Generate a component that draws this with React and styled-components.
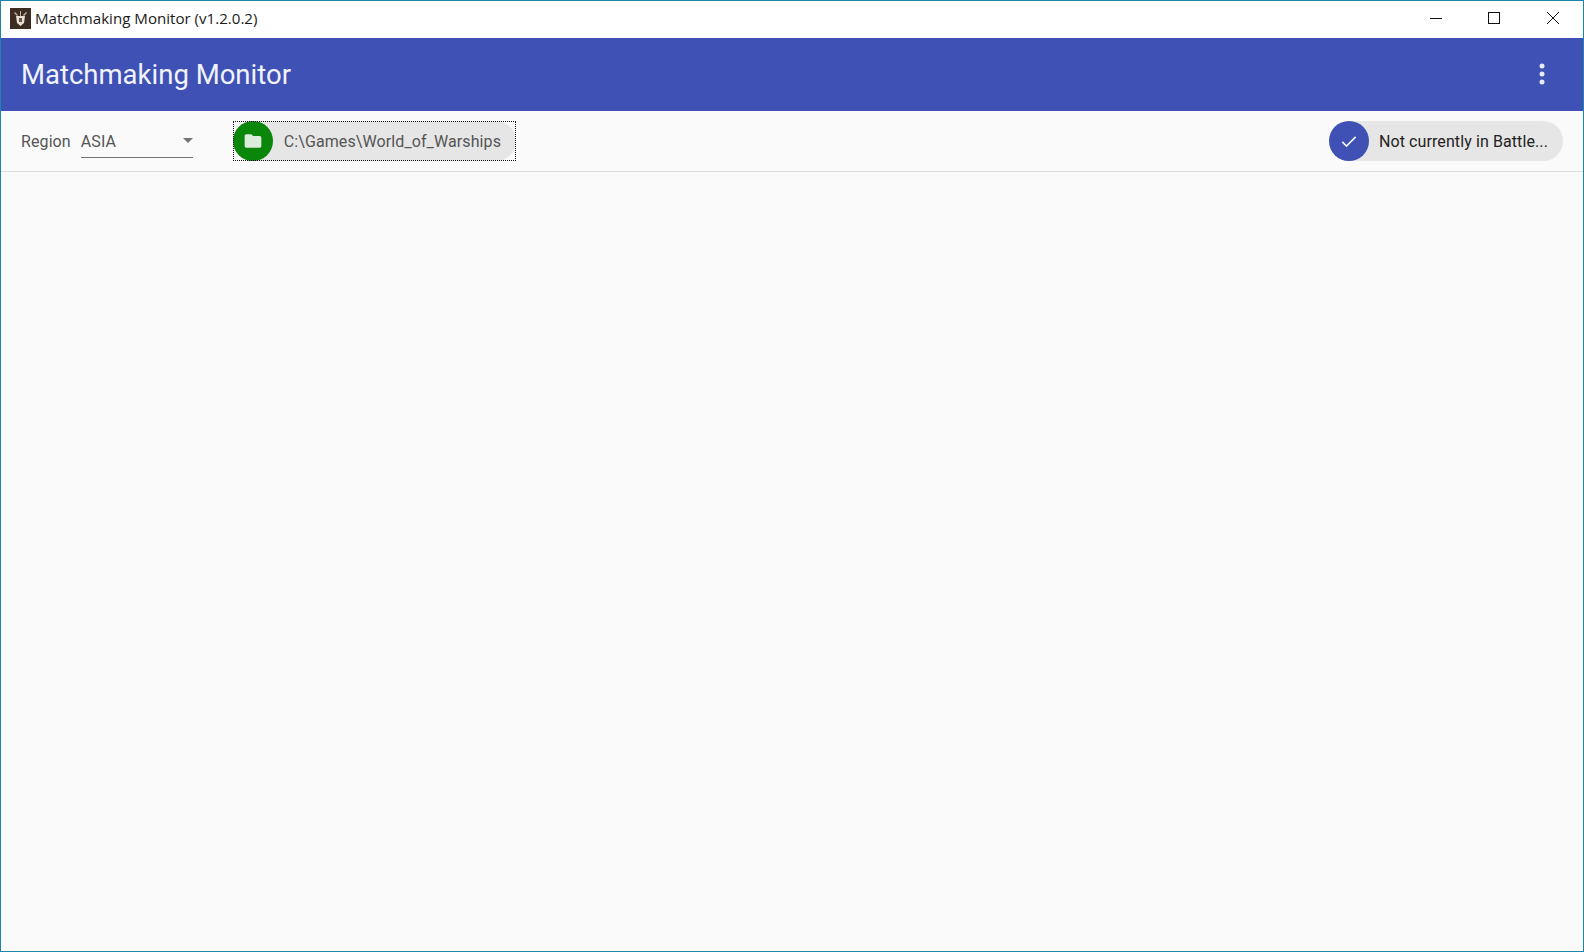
import React from "react";
import styled, { createGlobalStyle } from "styled-components";

const GlobalStyle = createGlobalStyle`
  html, body {
    margin: 0;
    padding: 0;
    background: #fafafa;
  }
  * {
    box-sizing: border-box;
  }
`;

const Window = styled.div`
  width: 1584px;
  height: 952px;
  display: flex;
  flex-direction: column;
  overflow: hidden;
  border: 1px solid #1a86a8;
  background: #fafafa;
  font-family: Roboto, sans-serif;
`;

const TitleBar = styled.div`
  height: 37px;
  flex: none;
  display: flex;
  align-items: center;
  background: #fff;
  padding: 0 0 3px 9px;
`;

const AppIcon = styled.svg`
  width: 21px;
  height: 21px;
  flex: none;
  margin-right: 4px;
`;

const WindowTitle = styled.div`
  flex: 1;
  font-family: "Open Sans", sans-serif;
  font-size: 15.1px;
  color: #1a1a1a;
  white-space: nowrap;
`;

const WindowButton = styled.div`
  width: 58px;
  height: 30px;
  display: flex;
  align-items: center;
  justify-content: center;
`;

const CloseButton = styled(WindowButton)`
  width: 60px;
`;

const WindowButtons = styled.div`
  display: flex;
`;

const AppBar = styled.div`
  height: 73px;
  flex: none;
  display: flex;
  align-items: center;
  justify-content: space-between;
  background: #3f51b5;
  padding: 0 20px;
  color: #fff;
`;

const AppTitle = styled.div`
  font-size: 27.5px;
  font-weight: 400;
  color: #f1f3fb;
`;

const MenuDots = styled.svg`
  width: 10px;
  height: 24px;
  margin: 0 16px 2px 0;
`;

const Toolbar = styled.div`
  height: 61px;
  flex: none;
  display: flex;
  align-items: center;
  padding: 0 20px;
  border-bottom: 1px solid #dedede;
  font-size: 16px;
  letter-spacing: 0.1px;
`;

const RegionLabel = styled.span`
  color: #555;
  margin-right: 10px;
`;

const RegionSelect = styled.div`
  width: 112px;
  height: 34px;
  padding-top: 2px;
  display: flex;
  align-items: center;
  justify-content: space-between;
  border-bottom: 1px solid #757575;
  color: #555;
  margin-right: 40px;
`;

const Caret = styled.span`
  width: 0;
  height: 0;
  margin-top: -2px;
  border-left: 5px solid transparent;
  border-right: 5px solid transparent;
  border-top: 5px solid #757575;
`;

const Chip = styled.div`
  height: 40px;
  display: flex;
  align-items: center;
  border-radius: 20px;
  background: #e6e6e6;
  padding-right: 15px;
  color: ${(props) => props.$text};
`;

const FocusFrame = styled.div`
  outline: 1px dotted #111;
  outline-offset: -1px;
`;

const ChipIcon = styled.div`
  width: 40px;
  height: 40px;
  flex: none;
  display: flex;
  align-items: center;
  justify-content: center;
  border-radius: 50%;
  margin-right: ${(props) => props.$gap}px;
  background: ${(props) => props.$bg};
`;

const Spacer = styled.div`
  flex: 1;
`;

const Main = styled.div`
  flex: 1;
  background: #fafafa;
`;

const App = () => {
  return (
    <Window>
      <GlobalStyle />
      <TitleBar>
        <AppIcon viewBox="0 0 21 21">
          <rect width="21" height="21" fill="#3d2c22" />
          <path d="M6 8h9l-1 7-3.500 3-3.500-3z" fill="#e6ded2" />
          <path d="M10 3h1v5h-1zM5 4l3 3-1 1-3-3zM16 4l1 1-3 3-1-1z" fill="#b9afa3" />
          <rect x="9" y="10" width="3" height="4" fill="#6b5a4c" />
        </AppIcon>
        <WindowTitle>Matchmaking Monitor (v1.2.0.2)</WindowTitle>
        <WindowButtons>
          <WindowButton>
            <svg width="12" height="12" viewBox="0 0 12 12">
              <path d="M0 6.500h12" stroke="#111" />
            </svg>
          </WindowButton>
          <WindowButton>
            <svg width="12" height="12" viewBox="0 0 12 12">
              <rect x="0.500" y="0.500" width="11" height="11" fill="none" stroke="#111" />
            </svg>
          </WindowButton>
          <CloseButton>
            <svg width="12" height="12" viewBox="0 0 12 12">
              <path d="M0 0l12 12M12 0L0 12" stroke="#111" />
            </svg>
          </CloseButton>
        </WindowButtons>
      </TitleBar>
      <AppBar>
        <AppTitle>Matchmaking Monitor</AppTitle>
        <MenuDots viewBox="0 0 10 24">
          <circle cx="5" cy="4" r="2.500" fill="#e8ebf8" />
          <circle cx="5" cy="12" r="2.500" fill="#e8ebf8" />
          <circle cx="5" cy="20" r="2.500" fill="#e8ebf8" />
        </MenuDots>
      </AppBar>
      <Toolbar>
        <RegionLabel>Region</RegionLabel>
        <RegionSelect>
          ASIA
          <Caret />
        </RegionSelect>
        <FocusFrame>
          <Chip $text="#555">
            <ChipIcon $bg="#0a860a" $gap={11}>
              <svg width="20" height="20" viewBox="0 0 24 24">
                <path
                  d="M10 4H4c-1.100 0-2 .9-2 2v12c0 1.100.9 2 2 2h16c1.100 0 2-.9 2-2V8c0-1.100-.9-2-2-2h-8l-2-2z"
                  fill="#dcecdc"
                />
              </svg>
            </ChipIcon>
            C:\Games\World_of_Warships
          </Chip>
        </FocusFrame>
        <Spacer />
        <Chip $text="#222">
          <ChipIcon $bg="#3f51b5" $gap={10}>
            <svg width="20" height="20" viewBox="0 0 24 24">
              <path d="M4 13l5 5L20 7" fill="none" stroke="#f1f3fb" strokeWidth="2" />
            </svg>
          </ChipIcon>
          Not currently in Battle...
        </Chip>
      </Toolbar>
      <Main />
    </Window>
  );
};

export default App;
